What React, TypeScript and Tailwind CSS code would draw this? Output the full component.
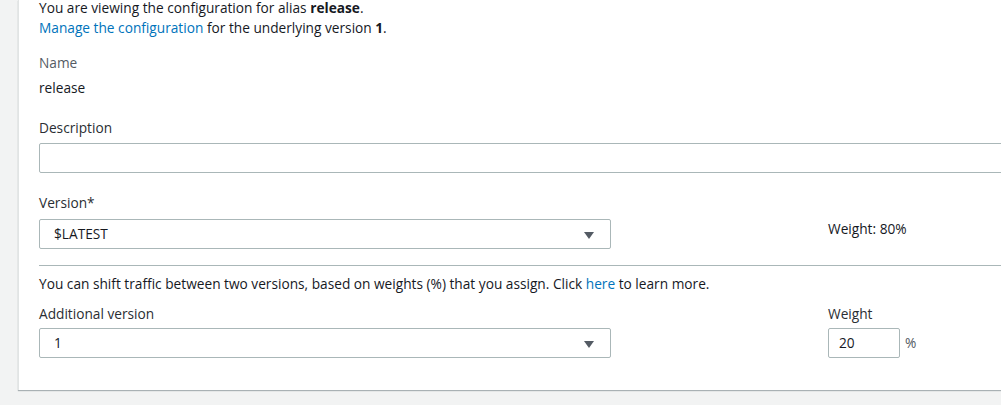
const Arrow = () => (
    <svg width="10" height="7" viewBox="0 0 10 7" className="absolute right-[16px] top-[12px]">
        <path d="M0 0 H10 L5 7 Z" fill="#545b64" />
    </svg>
);

const Select = ({value}: {value: string}) => (
    <div className="relative w-[572px] h-[30px] border border-[#aab7b8] rounded-[2px] bg-white flex items-center px-[14px] text-[#16191f]">
        {value}
        <Arrow />
    </div>
);

export default function App() {
    return (
        <div className="w-[1001px] h-[405px] overflow-hidden bg-[#f2f3f3] text-[13.7px] leading-[20px] text-[#16191f]" style={{fontFamily: '"Open Sans", "Noto Sans", sans-serif'}}>
            <div className="ml-[18px] w-[1100px] bg-white border-l border-[#e1e4e4] shadow-[0_1px_1px_0_rgba(0,28,36,0.3)] pl-[20px] pb-[32px]">
                <p className="leading-[16px]">You are viewing the configuration for alias <b className="font-bold">release</b>.</p>
                <p className="mt-[2px]">
                    <span className="text-[#0073bb]">Manage the configuration</span> for the underlying version <b className="font-bold">1</b>.
                </p>

                <p className="mt-[15px] text-[#545b64]">Name</p>
                <p className="mt-[5px]">release</p>

                <p className="mt-[20px] text-[#2a2e33]">Description</p>
                <div className="mt-[5px] w-[1000px] h-[30px] border border-[#aab7b8] rounded-[2px]"></div>

                <div className="mt-[20px] flex">
                    <div>
                        <p className="text-[#2a2e33]">Version*</p>
                        <div className="mt-[6px]">
                            <Select value="$LATEST" />
                        </div>
                    </div>
                    <p className="ml-[217px] mt-[26px]">Weight: 80%</p>
                </div>

                <div className="mt-[16px] w-[1000px] border-t border-[#aab7b8]"></div>

                <p className="mt-[8px]">
                    You can shift traffic between two versions, based on weights (%) that you assign. Click <span className="text-[#0073bb]">here</span> to learn more.
                </p>

                <div className="mt-[10px] flex">
                    <div>
                        <p className="text-[#2a2e33]">Additional version</p>
                        <div className="mt-[4px]">
                            <Select value="1" />
                        </div>
                    </div>
                    <div className="ml-[217px]">
                        <p className="text-[#2a2e33]">Weight</p>
                        <div className="mt-[4px] flex items-center">
                            <div className="w-[72px] h-[30px] border border-[#aab7b8] rounded-[2px] flex items-center px-[10px]">20</div>
                            <span className="ml-[5px] text-[#545b64]">%</span>
                        </div>
                    </div>
                </div>
            </div>
        </div>
    );
}
